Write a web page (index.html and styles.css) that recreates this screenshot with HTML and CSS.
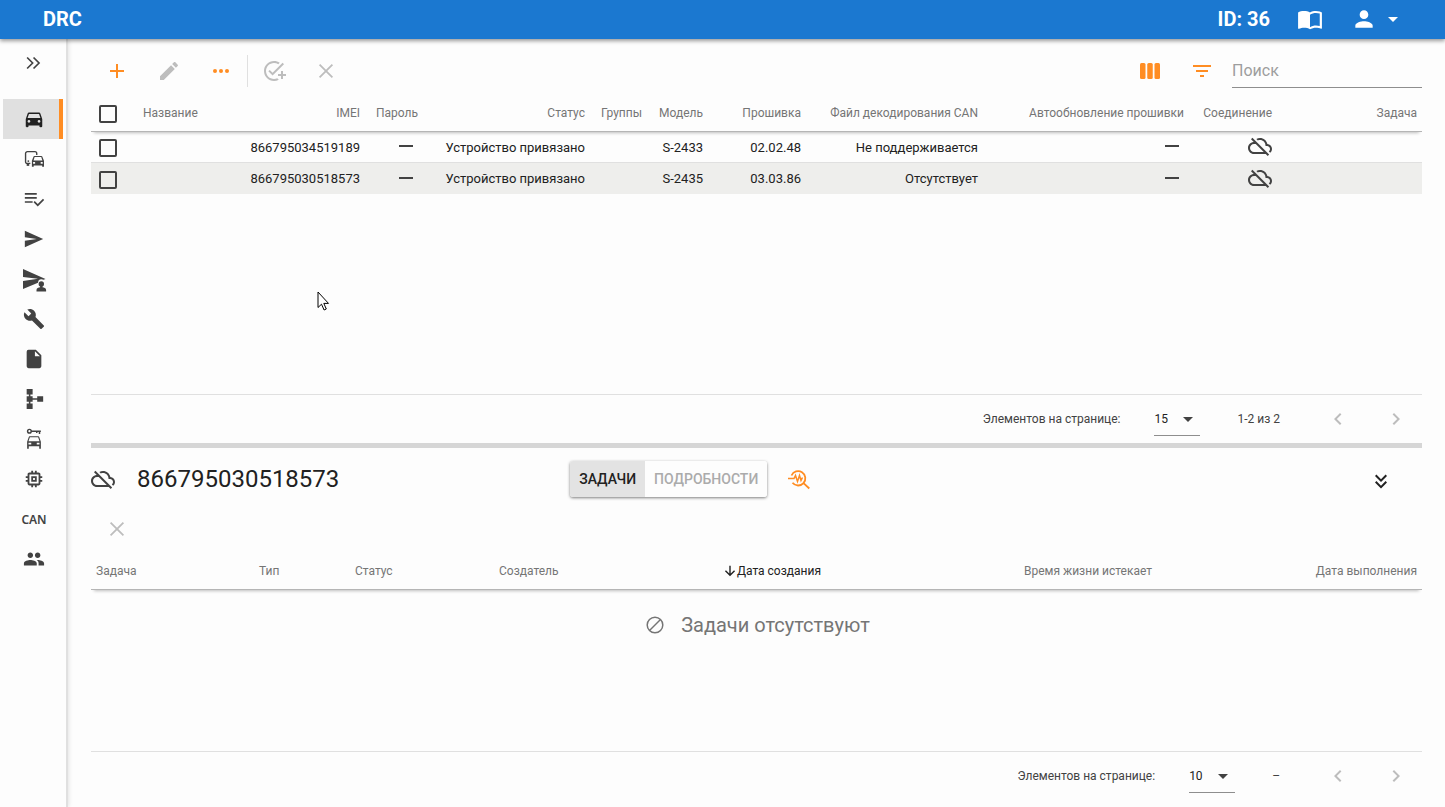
FILE: index.html
```html
<!DOCTYPE html>
<html lang="ru">
<head>
    <meta charset="UTF-8">
    <meta name="viewport" content="width=device-width, initial-scale=1.0">
    <title>DRC</title>
    <link rel="stylesheet" href="styles.css">
</head>
<body>
    <!-- общие иконки -->
    <svg class="sprite" aria-hidden="true">
        <symbol id="cloud-off" viewBox="0 0 24 24"><path d="M24 15c0-2.64-2.05-4.78-4.65-4.96C18.67 6.59 15.64 4 12 4c-1.33 0-2.57.36-3.65.97l1.49 1.49C10.51 6.17 11.23 6 12 6c3.04 0 5.5 2.46 5.5 5.5v.5H19c1.66 0 3 1.34 3 3 0 .99-.48 1.85-1.21 2.4l1.41 1.41c1.09-.92 1.8-2.27 1.8-3.81zM4.41 3.86L3 5.27l2.77 2.77h-.42C2.34 8.36 0 10.91 0 14c0 3.31 2.69 6 6 6h11.73l2 2 1.41-1.41L4.41 3.86zM6 18c-2.21 0-4-1.79-4-4s1.79-4 4-4h1.73l8 8H6z"/></symbol>
        <symbol id="minus" viewBox="0 0 24 24"><path d="M5 11h14v2H5z"/></symbol>
        <symbol id="close" viewBox="0 0 24 24"><path d="M5.6 5.6l12.8 12.8M18.4 5.6L5.6 18.4" fill="none" stroke="currentColor" stroke-width="1.8"/></symbol>
        <symbol id="caret" viewBox="0 0 24 24"><path d="M7 10l5 5 5-5z"/></symbol>
        <symbol id="left" viewBox="0 0 24 24"><path d="M15.41 7.41L14 6l-6 6 6 6 1.41-1.41L10.83 12z"/></symbol>
        <symbol id="right" viewBox="0 0 24 24"><path d="M8.59 16.59L13.17 12 8.59 7.41 10 6l6 6-6 6z"/></symbol>
    </svg>

    <header class="topbar">
        <div class="logo">DRC</div>
        <div class="account-id">ID: 36</div>
        <a href="#" class="manual" aria-label="Руководство">
            <svg class="icon" viewBox="0 0 24 24"><path d="M21 5c-1.11-.35-2.33-.5-3.5-.5-1.95 0-4.05.4-5.5 1.5-1.45-1.1-3.55-1.5-5.5-1.5S2.45 4.9 1 6v14.65c0 .25.25.5.5.5.1 0 .15-.05.25-.05C3.1 20.45 5.05 20 6.5 20c1.95 0 4.05.4 5.5 1.5 1.35-.85 3.8-1.5 5.5-1.5 1.65 0 3.35.3 4.75 1.05.1.05.15.05.25.05.25 0 .5-.25.5-.5V6c-.6-.45-1.25-.75-2-1zm0 13.5c-1.1-.35-2.3-.5-3.5-.5-1.7 0-4.15.65-5.5 1.5V8c1.35-.85 3.8-1.5 5.5-1.5 1.2 0 2.4.15 3.5.5v11.5z"/></svg>
        </a>
        <button class="user" aria-label="Профиль">
            <svg class="icon icon-user" viewBox="0 0 24 24"><path d="M12 12c2.21 0 4-1.79 4-4s-1.79-4-4-4-4 1.79-4 4 1.79 4 4 4zm0 2c-2.67 0-8 1.34-8 4v2h16v-2c0-2.66-5.33-4-8-4z"/></svg>
            <svg class="icon"><use href="#caret"/></svg>
        </button>
    </header>

    <div class="layout">
        <nav class="sidebar">
            <button class="expand" aria-label="Развернуть">
                <svg class="icon icon-nav" viewBox="0 0 24 24"><path d="M5.6 6l6 6-6 6M12.6 6l6 6-6 6" fill="none" stroke="currentColor" stroke-width="1.8"/></svg>
            </button>
            <a href="#" class="nav-item active" aria-label="Устройства">
                <svg class="icon icon-nav" viewBox="0 0 24 24"><path d="M18.92 6.01C18.72 5.42 18.16 5 17.5 5h-11c-.66 0-1.21.42-1.42 1.01L3 12v8c0 .55.45 1 1 1h1c.55 0 1-.45 1-1v-1h12v1c0 .55.45 1 1 1h1c.55 0 1-.45 1-1v-8l-2.08-5.99zM6.5 16c-.83 0-1.5-.67-1.5-1.5S5.67 13 6.5 13s1.5.67 1.5 1.5S7.33 16 6.5 16zm11 0c-.83 0-1.5-.67-1.5-1.5s.67-1.5 1.5-1.5 1.5.67 1.5 1.5-.67 1.5-1.5 1.5zM5 11l1.5-4.5h11L19 11H5z"/></svg>
            </a>
            <a href="#" class="nav-item" aria-label="Группы">
                <svg class="icon icon-nav" viewBox="0 0 24 24"><path d="M8 16.8H4.4a1.6 1.6 0 0 1-1.6-1.6V6a2 2 0 0 1 2-2H13a2 2 0 0 1 2 2v1.5" fill="none" stroke="currentColor" stroke-width="1.5"/><circle cx="5.8" cy="14.3" r="1"/><path d="M4 17h2.800v2.500H4z"/><path fill-rule="evenodd" d="M21 9.300c-.15-.45-.55-.7-1-.7h-7.500c-.45 0-.85.25-1 .7L9.700 14v6.500h2V19h9.200v1.500h2V14zM12.700 9.900h7.200l1.200 3.600h-9.600zM11 15.300h2.200v1.800H11zM19.300 15.300h2.200v1.800h-2.200z"/></svg>
            </a>
            <a href="#" class="nav-item" aria-label="Задачи">
                <svg class="icon icon-nav" viewBox="0 0 24 24"><path d="M15 9.800H2v1.800h13zM15 5.500H2v1.800h13zM2 16.200h8.500v-1.800H2zm19.800-4.400l1.300 1.300-7 7-4.600-4.500 1.300-1.300 3.300 3.100z"/></svg>
            </a>
            <a href="#" class="nav-item" aria-label="Команды">
                <svg class="icon icon-nav" viewBox="0 0 24 24"><path d="M2 21l20-9L2 3v7l13 2-13 2z"/></svg>
            </a>
            <a href="#" class="nav-item" aria-label="Команды пользователя">
                <svg class="icon" viewBox="0 0 24 24"><path d="M1 22V14l15-2.200L1 10V2l22.500 9.900-2 .9a3.500 3.500 0 0 0-5.500 3z"/><circle cx="19.300" cy="17" r="2.700"/><path d="M14.500 24.500V23c0-1.800 2-2.500 3.600-2.700V19h2.400v1.300c1.600.2 3.600.9 3.600 2.700v1.500z"/></svg>
            </a>
            <a href="#" class="nav-item" aria-label="Настройки">
                <svg class="icon icon-nav" viewBox="0 0 24 24"><path d="M22.7 19l-9.1-9.1c.9-2.3.4-5-1.5-6.9-2-2-5-2.400-7.400-1.300L9 6 6 9 1.600 4.700C.4 7.100.9 10.100 2.900 12.100c1.900 1.900 4.600 2.400 6.900 1.500l9.100 9.100c.4.4 1 .4 1.400 0l2.300-2.300c.5-.4.5-1.100.1-1.400z"/></svg>
            </a>
            <a href="#" class="nav-item" aria-label="Файлы">
                <svg class="icon icon-nav" viewBox="0 0 24 24"><path d="M13 9V3.500L18.500 9M6 2a2 2 0 0 0-2 2v16a2 2 0 0 0 2 2h12a2 2 0 0 0 2-2V8l-6-6z"/></svg>
            </a>
            <a href="#" class="nav-item" aria-label="Схема">
                <svg class="icon icon-nav" viewBox="0 0 24 24"><path d="M4 1h6.500v6H4zM4 9h6.500v6H4zM4 17h6.500v6H4zM15.500 9H22v6h-6.500zM6.400 7h1.700v2H6.400zM6.400 15h1.700v2H6.400zM10.500 11.100h5v1.800h-5z"/></svg>
            </a>
            <a href="#" class="nav-item" aria-label="Доступ">
                <svg class="icon icon-nav" viewBox="0 0 24 24"><path d="M9 3.500h10.500M18 3.500v3M15 3.500v2" fill="none" stroke="currentColor" stroke-width="1.600"/><circle cx="7" cy="3.500" r="2" fill="none" stroke="currentColor" stroke-width="1.600"/><path fill-rule="evenodd" d="M16.800 9H7.200c-.4 0-.7.200-.9.700L4.500 15v7.500h1.800V20h11.400v2.500h1.800V15l-1.800-5.300c-.2-.5-.5-.7-.9-.7zM7.500 10h9l1.500 4.500H6zM6 16h3v2H6zM15 16h3v2h-3z"/></svg>
            </a>
            <a href="#" class="nav-item" aria-label="Прошивки">
                <svg class="icon icon-nav" viewBox="0 0 24 24"><path d="M15 9H9v6h6V9zm-2 4h-2v-2h2v2zm8-2V9h-2V7c0-1.100-.9-2-2-2h-2V3h-2v2h-2V3H9v2H7c-1.100 0-2 .9-2 2v2H3v2h2v2H3v2h2v2c0 1.100.9 2 2 2h2v2h2v-2h2v2h2v-2h2c1.100 0 2-.9 2-2v-2h2v-2h-2v-2h2zm-4 6H7V7h10v10z"/></svg>
            </a>
            <a href="#" class="nav-item">CAN</a>
            <a href="#" class="nav-item" aria-label="Пользователи">
                <svg class="icon icon-nav" viewBox="0 0 24 24"><path d="M16 11c1.66 0 2.99-1.34 2.99-3S17.66 5 16 5c-1.66 0-3 1.34-3 3s1.34 3 3 3zm-8 0c1.66 0 2.99-1.34 2.99-3S9.66 5 8 5C6.34 5 5 6.34 5 8s1.34 3 3 3zm0 2c-2.33 0-7 1.17-7 3.500V19h14v-2.500c0-2.330-4.670-3.500-7-3.500zm8 0c-.29 0-.62.02-.97.05 1.160.84 1.970 1.970 1.970 3.450V19h6v-2.500c0-2.330-4.670-3.500-7-3.500z"/></svg>
            </a>
        </nav>

        <main class="content">
            <!-- список устройств -->
            <section class="devices">
                <div class="toolbar">
                    <button class="tool accent" aria-label="Добавить"><svg class="icon" viewBox="0 0 24 24"><path d="M19 13h-6v6h-2v-6H5v-2h6V5h2v6h6z"/></svg></button>
                    <button class="tool" aria-label="Изменить" disabled><svg class="icon" viewBox="0 0 24 24"><path d="M3 17.25V21h3.75L17.81 9.94l-3.75-3.75zM20.71 7.04c.39-.39.39-1.02 0-1.41l-2.34-2.34c-.39-.39-1.02-.39-1.41 0l-1.83 1.83 3.75 3.75z"/></svg></button>
                    <button class="tool accent" aria-label="Ещё"><svg class="icon" viewBox="0 0 24 24"><circle cx="6" cy="12" r="2"/><circle cx="12" cy="12" r="2"/><circle cx="18" cy="12" r="2"/></svg></button>
                    <span class="divider"></span>
                    <button class="tool" aria-label="Создать задачу" disabled><svg class="icon" viewBox="0 0 24 24"><path d="M22 5.18L10.59 16.6l-4.24-4.24 1.41-1.41 2.83 2.83 10-10zM12 20c-4.42 0-8-3.58-8-8s3.58-8 8-8c1.57 0 3.04.46 4.28 1.25l1.45-1.45C16.1 2.67 14.13 2 12 2 6.48 2 2 6.48 2 12s4.48 10 10 10c1.73 0 3.36-.44 4.78-1.22l-1.5-1.5c-1 .46-2.11.72-3.28.72zM19 15h-3v2h3v3h2v-3h3v-2h-3v-3h-2z"/></svg></button>
                    <button class="tool" aria-label="Удалить" disabled><svg class="icon"><use href="#close"/></svg></button>
                    <span class="spacer"></span>
                    <button class="tool accent" aria-label="Столбцы"><svg class="icon" viewBox="0 0 24 24"><rect x="2" y="4" width="5.5" height="16" rx="1.5"/><rect x="9.25" y="4" width="5.5" height="16" rx="1.5"/><rect x="16.5" y="4" width="5.5" height="16" rx="1.5"/></svg></button>
                    <button class="tool accent" aria-label="Фильтр"><svg class="icon" viewBox="0 0 24 24"><path d="M6 13h12v-2H6zM3 6v2h18V6zm7 12h4v-2h-4z"/></svg></button>
                    <input type="text" class="search" placeholder="Поиск" aria-label="Поиск">
                </div>
                <table class="grid devices-grid">
                    <colgroup>
                        <col class="c-check"><col class="c-name"><col class="c-imei"><col class="c-pass"><col class="c-status"><col class="c-group"><col class="c-model"><col class="c-fw"><col class="c-can"><col class="c-auto"><col class="c-link"><col class="c-task">
                    </colgroup>
                    <thead>
                        <tr>
                            <th><input type="checkbox" class="check" aria-label="Выбрать все"></th>
                            <th class="left">Название</th>
                            <th>IMEI</th>
                            <th>Пароль</th>
                            <th>Статус</th>
                            <th>Группы</th>
                            <th>Модель</th>
                            <th>Прошивка</th>
                            <th>Файл декодирования CAN</th>
                            <th>Автообновление прошивки</th>
                            <th>Соединение</th>
                            <th>Задача</th>
                        </tr>
                    </thead>
                    <tbody>
                        <tr>
                            <td><input type="checkbox" class="check" aria-label="Выбрать 866795034519189"></td>
                            <td></td>
                            <td>866795034519189</td>
                            <td><svg class="icon"><use href="#minus"/></svg></td>
                            <td>Устройство привязано</td>
                            <td></td>
                            <td>S-2433</td>
                            <td>02.02.48</td>
                            <td>Не поддерживается</td>
                            <td><svg class="icon"><use href="#minus"/></svg></td>
                            <td><svg class="icon"><use href="#cloud-off"/></svg></td>
                            <td></td>
                        </tr>
                        <tr class="selected">
                            <td><input type="checkbox" class="check" aria-label="Выбрать 866795030518573"></td>
                            <td></td>
                            <td>866795030518573</td>
                            <td><svg class="icon"><use href="#minus"/></svg></td>
                            <td>Устройство привязано</td>
                            <td></td>
                            <td>S-2435</td>
                            <td>03.03.86</td>
                            <td>Отсутствует</td>
                            <td><svg class="icon"><use href="#minus"/></svg></td>
                            <td><svg class="icon"><use href="#cloud-off"/></svg></td>
                            <td></td>
                        </tr>
                    </tbody>
                </table>
                <div class="pager">
                    <label for="size1">Элементов на странице:</label>
                    <div class="size">
                        <select id="size1"><option>15</option></select>
                        <svg class="icon"><use href="#caret"/></svg>
                    </div>
                    <span class="range">1-2 из 2</span>
                    <button class="page" aria-label="Назад" disabled><svg class="icon"><use href="#left"/></svg></button>
                    <button class="page" aria-label="Вперёд" disabled><svg class="icon"><use href="#right"/></svg></button>
                </div>
            </section>

            <!-- задачи выбранного устройства -->
            <section class="details">
                <div class="details-head">
                    <div class="device">
                        <svg class="icon"><use href="#cloud-off"/></svg>
                        <h1>866795030518573</h1>
                    </div>
                    <div class="tabs">
                        <button class="tab active">ЗАДАЧИ</button>
                        <button class="tab">ПОДРОБНОСТИ</button>
                    </div>
                    <button class="tool accent diag" aria-label="Диагностика">
                        <svg class="icon" viewBox="0 0 24 24" fill="none" stroke="currentColor" stroke-width="1.8"><path d="M4.500 8.500a7.200 7.200 0 1 1 1 7.300M16.800 16.300l5.500 5.200"/><path d="M1 11.500h6l1.500-3 2 6 2-6 1.500 5 1.500-3" stroke-width="1.5"/></svg>
                    </button>
                    <button class="tool collapse" aria-label="Свернуть">
                        <svg class="icon" viewBox="0 0 24 24"><path d="M16.59 7.590L18 9l-6 6-6-6 1.410-1.410L12 12.170zM16.590 14.090L18 15.500l-6 6-6-6 1.410-1.410L12 18.670z"/></svg>
                    </button>
                </div>
                <div class="task-tools">
                    <button class="tool" aria-label="Отменить задачу" disabled><svg class="icon"><use href="#close"/></svg></button>
                </div>
                <table class="grid tasks-grid">
                    <colgroup>
                        <col class="t-task"><col class="t-type"><col class="t-status"><col class="t-author"><col class="t-created"><col class="t-expire"><col class="t-done">
                    </colgroup>
                    <thead>
                        <tr>
                            <th class="left">Задача</th>
                            <th class="left">Тип</th>
                            <th class="left">Статус</th>
                            <th class="left">Создатель</th>
                            <th class="sorted"><svg class="icon icon-sort" viewBox="0 0 16 16"><path d="M8 2v11M2.800 7.600L8 12.800l5.200-5.200" fill="none" stroke="currentColor" stroke-width="1.600"/></svg>Дата создания</th>
                            <th>Время жизни истекает</th>
                            <th>Дата выполнения</th>
                        </tr>
                    </thead>
                </table>
                <div class="empty">
                    <svg class="icon" viewBox="0 0 24 24" fill="none" stroke="currentColor" stroke-width="1.5"><circle cx="12" cy="12" r="7.800"/><path d="M6.500 17.500l11-11"/></svg>
                    Задачи отсутствуют
                </div>
                <div class="pager">
                    <label for="size2">Элементов на странице:</label>
                    <div class="size">
                        <select id="size2"><option>10</option></select>
                        <svg class="icon"><use href="#caret"/></svg>
                    </div>
                    <span class="range">–</span>
                    <button class="page" aria-label="Назад" disabled><svg class="icon"><use href="#left"/></svg></button>
                    <button class="page" aria-label="Вперёд" disabled><svg class="icon"><use href="#right"/></svg></button>
                </div>
            </section>
        </main>
    </div>

    <svg class="cursor" viewBox="0 0 13 20" aria-hidden="true"><path d="M1 1v15.500l3.500-3.300 2.600 5.800 2.200-1-2.500-5.600H11.500z" fill="#fff" stroke="#000" stroke-width="1"/></svg>
</body>
</html>
```

FILE: styles.css
```css
*{
    box-sizing:border-box;
}
body{
    margin:0;
    height:100vh;
    display:flex;
    flex-direction:column;
    background-color:#fdfdfd;
    color:#212121;
    font-family:Roboto, "Noto Sans", sans-serif;
    font-size:13px;
}
button{
    display:flex;
    align-items:center;
    justify-content:center;
    padding:0;
    border:0;
    background:none;
    color:inherit;
    font-family:inherit;
    cursor:pointer;
}
a{
    color:inherit;
    text-decoration:none;
}
.sprite{
    display:none;
}
.icon{
    width:24px;
    height:24px;
    flex:none;
    fill:currentColor;
    overflow:visible;
}
.icon[fill="none"]{
    fill:none;
}
.icon-nav{
    width:22px;
    height:22px;
}

/* шапка */
.topbar{
    display:flex;
    align-items:center;
    height:39px;
    flex:none;
    padding:0 40px 1px 43px;
    background-color:#1b78d0;
    color:#fff;
    font-size:20px;
    font-weight:700;
    box-shadow:0 2px 4px rgba(0,0,0,.4);
    position:relative;
    z-index:2;
}
.logo{
    flex:1;
}
.manual{
    display:flex;
    margin:0 28px 0 27px;
}
.manual .icon,
.icon-user{
    width:26px;
    height:26px;
}
.user{
    gap:4px;
}

.layout{
    display:flex;
    flex:1;
    min-height:0;
}

/* боковое меню */
.sidebar{
    width:66px;
    flex:none;
    padding:4px 3px 0;
    color:#424242;
    box-shadow:2px 0 0 #e0e0e0, 3px 0 4px rgba(0,0,0,.1);
}
.expand{
    width:100%;
    height:40px;
    margin-bottom:16px;
}
.nav-item{
    display:flex;
    align-items:center;
    justify-content:center;
    height:40px;
    padding-left:6px;
    border-right:4px solid transparent;
    font-family:"Noto Sans", sans-serif;
    font-size:12px;
    font-weight:600;
}
.nav-item.active{
    background-color:#e0e0e0;
    border-right-color:#ff8d23;
    color:#212121;
}

.content{
    display:flex;
    flex:1;
    flex-direction:column;
    min-width:0;
    padding:0 23px 7px 25px;
}

/* панель кнопок */
.devices{
    display:flex;
    flex-direction:column;
    height:409px;
    flex:none;
    border-bottom:5px solid #d6d6d6;
}
.toolbar{
    display:flex;
    align-items:center;
    height:56px;
    flex:none;
    padding-top:8px;
}
.tool{
    width:52px;
    height:38px;
}
.tool:disabled,
.page:disabled{
    color:#bdbdbd;
    cursor:default;
}
.accent{
    color:#ff8d23;
}
.divider{
    height:32px;
    border-left:1px solid #e0e0e0;
}
.spacer{
    flex:1;
}
.search{
    width:190px;
    height:33px;
    margin-left:4px;
    padding:0;
    border:0;
    border-bottom:1px solid #8e8e8e;
    background:none;
    color:#212121;
    font-family:inherit;
    font-size:16px;
    outline:none;
}
.search::placeholder{
    color:#9e9e9e;
}

/* таблицы */
.grid{
    width:100%;
    table-layout:fixed;
    border-collapse:separate;
    border-spacing:0;
}
.grid th{
    height:37px;
    padding:0 8px;
    color:#757575;
    font-size:12px;
    font-weight:400;
    text-align:right;
    white-space:nowrap;
    border-bottom:1px solid #b5b5b5;
}
.grid thead{
    box-shadow:0 4px 3px -3px rgba(0,0,0,.25);
}
.grid th.left{
    text-align:left;
}
.grid th.sorted{
    color:#212121;
}
.grid td{
    height:30px;
    padding:0 8px;
    text-align:right;
    white-space:nowrap;
}
.grid td .icon{
    display:block;
    margin:0 0 2px auto;
    color:#424242;
}
.grid tbody tr + tr td{
    height:32px;
    border-top:1px solid #e0e0e0;
}
.selected{
    background-color:#eeeeec;
}
.check{
    display:block;
    width:18px;
    height:18px;
    margin:2px 0 0;
    border:2px solid #424242;
    border-radius:2px;
    appearance:none;
}
.c-check{ width:44px; }
.c-name{ width:107px; }
.c-imei{ width:126px; }
.c-pass{ width:58px; }
.c-status{ width:167px; }
.c-group{ width:57px; }
.c-model{ width:61px; }
.c-fw{ width:98px; }
.c-can{ width:177px; }
.c-auto{ width:206px; }
.c-link{ width:88px; }
.c-task{ width:142px; }
.devices-grid th:last-child,
.tasks-grid th{
    padding:0 5px;
}
.t-task{ width:163px; }
.t-type{ width:96px; }
.t-status{ width:144px; }
.t-author{ width:170px; }
.t-created{ width:162px; }
.t-expire{ width:331px; }
.t-done{ width:265px; }
.icon-sort{
    width:14px;
    height:14px;
    vertical-align:text-top;
}

/* постраничный вывод */
.pager{
    display:flex;
    align-items:center;
    justify-content:flex-end;
    height:49px;
    flex:none;
    margin-top:auto;
    border-top:1px solid #e0e0e0;
    color:#424242;
    font-size:12px;
}
.size{
    position:relative;
    margin:0 37px 0 34px;
}
.size select{
    display:block;
    width:46px;
    height:34px;
    padding:0;
    border:0;
    border-bottom:1px solid #8e8e8e;
    border-radius:0;
    background:none;
    color:#212121;
    font-family:inherit;
    font-size:12px;
    appearance:none;
    outline:none;
}
/* стрелка поверх списка */
.size .icon{
    position:absolute;
    top:5px;
    right:0;
    pointer-events:none;
}
.range{
    margin-right:32px;
}
.page{
    width:52px;
    height:36px;
}
.page + .page{
    margin-left:6px;
}

/* нижняя панель */
.details{
    display:flex;
    flex:1;
    flex-direction:column;
}
.details-head{
    display:flex;
    align-items:center;
    height:62px;
    flex:none;
}
.device{
    display:flex;
    align-items:center;
    gap:22px;
    width:36%;
    color:#424242;
}
.device h1{
    margin:0;
    color:#212121;
    font-size:24px;
    font-weight:400;
}
.tabs{
    display:flex;
    height:36px;
    border-radius:3px;
    overflow:hidden;
    box-shadow:0 1px 3px rgba(0,0,0,.5);
}
.tab{
    padding:0 9px;
    background-color:#fdfdfd;
    color:#ababab;
    font-size:14px;
    font-weight:500;
}
.tab.active{
    background-color:#e3e3e3;
    color:#212121;
}
.diag{
    margin-left:6px;
}
.collapse{
    margin-left:auto;
    margin-right:15px;
}
.task-tools{
    height:43px;
    flex:none;
}
.empty{
    display:flex;
    align-items:center;
    justify-content:center;
    gap:14px;
    height:70px;
    color:#757575;
    font-size:20px;
}

.cursor{
    position:absolute;
    left:317px;
    top:291px;
    width:13px;
    height:20px;
}
```
